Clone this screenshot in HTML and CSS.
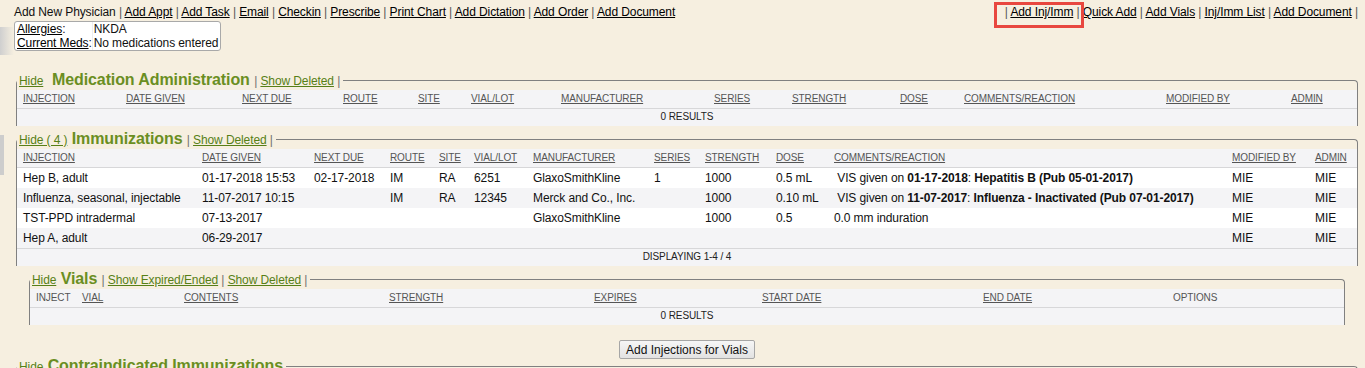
FILE: index.html
```html
<!DOCTYPE html>
<html>

<head>
  <meta charset="UTF-8">
  <title>Patient Chart - Injections</title>
  <link rel="stylesheet" href="styles.css">
</head>

<body>

  <div class="edge edge-top"></div>
  <div class="edge edge-mid"></div>

  <div class="topbar">
    <div class="topbar-left">
      <div class="links">
        Add New Physician <span class="pipe">|</span> <a href="#">Add Appt</a> <span class="pipe">|</span>
        <a href="#">Add Task</a> <span class="pipe">|</span> <a href="#">Email</a> <span class="pipe">|</span>
        <a href="#">Checkin</a> <span class="pipe">|</span> <a href="#">Prescribe</a> <span class="pipe">|</span>
        <a href="#">Print Chart</a> <span class="pipe">|</span> <a href="#">Add Dictation</a> <span class="pipe">|</span>
        <a href="#">Add Order</a> <span class="pipe">|</span> <a href="#">Add Document</a>
      </div>
      <table class="alerts">
        <tr>
          <td class="alerts-label"><a href="#">Allergies</a>:</td>
          <td class="alerts-value">NKDA</td>
        </tr>
        <tr>
          <td class="alerts-label"><a href="#">Current Meds</a>:</td>
          <td class="alerts-value">No medications entered</td>
        </tr>
      </table>
    </div>

    <div class="links">
      <span class="pipe">|</span> <a href="#">Add Inj/Imm</a> <span class="pipe">|</span>
      <a href="#">Quick Add</a> <span class="pipe">|</span> <a href="#">Add Vials</a> <span class="pipe">|</span>
      <a href="#">Inj/Imm List</a> <span class="pipe">|</span> <a href="#">Add Document</a> <span class="pipe">|</span>
    </div>
  </div>

  <!-- medication administration -->
  <fieldset class="section">
    <legend><a class="small" href="#">Hide</a>&nbsp; <span class="title">Medication Administration</span> <span class="small sep">| <a href="#">Show Deleted</a> |</span></legend>
    <table class="grid med-grid">
      <colgroup>
        <col><col><col><col><col><col><col><col><col><col><col><col><col>
      </colgroup>
      <thead>
        <tr>
          <th><a href="#">Injection</a></th>
          <th><a href="#">Date Given</a></th>
          <th><a href="#">Next Due</a></th>
          <th><a href="#">Route</a></th>
          <th><a href="#">Site</a></th>
          <th><a href="#">Vial/Lot</a></th>
          <th><a href="#">Manufacturer</a></th>
          <th><a href="#">Series</a></th>
          <th><a href="#">Strength</a></th>
          <th><a href="#">Dose</a></th>
          <th><a href="#">Comments/Reaction</a></th>
          <th><a href="#">Modified By</a></th>
          <th><a href="#">Admin</a></th>
        </tr>
      </thead>
      <tfoot>
        <tr><td colspan="13">0 results</td></tr>
      </tfoot>
    </table>
  </fieldset>

  <!-- immunizations -->
  <fieldset class="section">
    <legend><a class="small" href="#">Hide ( 4 )</a> <span class="title">Immunizations</span> <span class="small sep">| <a href="#">Show Deleted</a> |</span></legend>
    <table class="grid imm-grid">
      <colgroup>
        <col><col><col><col><col><col><col><col><col><col><col><col><col>
      </colgroup>
      <thead>
        <tr>
          <th><a href="#">Injection</a></th>
          <th><a href="#">Date Given</a></th>
          <th><a href="#">Next Due</a></th>
          <th><a href="#">Route</a></th>
          <th><a href="#">Site</a></th>
          <th><a href="#">Vial/Lot</a></th>
          <th><a href="#">Manufacturer</a></th>
          <th><a href="#">Series</a></th>
          <th><a href="#">Strength</a></th>
          <th><a href="#">Dose</a></th>
          <th><a href="#">Comments/Reaction</a></th>
          <th><a href="#">Modified By</a></th>
          <th><a href="#">Admin</a></th>
        </tr>
      </thead>
      <tbody>
        <tr>
          <td>Hep B, adult</td>
          <td>01-17-2018 15:53</td>
          <td>02-17-2018</td>
          <td>IM</td>
          <td>RA</td>
          <td>6251</td>
          <td>GlaxoSmithKline</td>
          <td>1</td>
          <td>1000</td>
          <td>0.5 mL</td>
          <td>&nbsp;VIS given on <b>01-17-2018</b>: <b>Hepatitis B (Pub 05-01-2017)</b></td>
          <td>MIE</td>
          <td>MIE</td>
        </tr>
        <tr>
          <td>Influenza, seasonal, injectable</td>
          <td>11-07-2017 10:15</td>
          <td></td>
          <td>IM</td>
          <td>RA</td>
          <td>12345</td>
          <td>Merck and Co., Inc.</td>
          <td></td>
          <td>1000</td>
          <td>0.10 mL</td>
          <td>&nbsp;VIS given on <b>11-07-2017</b>: <b>Influenza - Inactivated (Pub 07-01-2017)</b></td>
          <td>MIE</td>
          <td>MIE</td>
        </tr>
        <tr>
          <td>TST-PPD intradermal</td>
          <td>07-13-2017</td>
          <td></td>
          <td></td>
          <td></td>
          <td></td>
          <td>GlaxoSmithKline</td>
          <td></td>
          <td>1000</td>
          <td>0.5</td>
          <td>0.0 mm induration</td>
          <td>MIE</td>
          <td>MIE</td>
        </tr>
        <tr>
          <td>Hep A, adult</td>
          <td>06-29-2017</td>
          <td></td>
          <td></td>
          <td></td>
          <td></td>
          <td></td>
          <td></td>
          <td></td>
          <td></td>
          <td></td>
          <td>MIE</td>
          <td>MIE</td>
        </tr>
      </tbody>
      <tfoot>
        <tr><td colspan="13">Displaying 1-4 / 4</td></tr>
      </tfoot>
    </table>
  </fieldset>

  <!-- vials -->
  <fieldset class="section vials">
    <legend><a class="small" href="#">Hide</a> <span class="title">Vials</span> <span class="small sep">| <a href="#">Show Expired/Ended</a> | <a href="#">Show Deleted</a> |</span></legend>
    <table class="grid vial-grid">
      <colgroup>
        <col><col><col><col><col><col><col><col>
      </colgroup>
      <thead>
        <tr>
          <th>Inject</th>
          <th><a href="#">Vial</a></th>
          <th><a href="#">Contents</a></th>
          <th><a href="#">Strength</a></th>
          <th><a href="#">Expires</a></th>
          <th><a href="#">Start Date</a></th>
          <th><a href="#">End Date</a></th>
          <th>Options</th>
        </tr>
      </thead>
      <tfoot>
        <tr><td colspan="8">0 results</td></tr>
      </tfoot>
    </table>
  </fieldset>

  <div class="actions">
    <button type="button">Add Injections for Vials</button>
  </div>

  <!-- contraindicated -->
  <fieldset class="section">
    <legend><a class="small" href="#">Hide</a> <span class="title">Contraindicated Immunizations</span></legend>
  </fieldset>

  <div class="callout"></div>

</body>

</html>
```

FILE: styles.css
```css
:root {
  --page-bg: #f6efe0;
  --grid-bg: #f4f4f6;
  --grid-line: #d7d7d9;
  --green-title: #6a8e22;
  --green-link: #577f16;
}

body {
  position: relative;
  height: 368px;
  box-sizing: border-box;
  margin: 0;
  padding: 5px 7px 0 14px;
  overflow: hidden;

  background-color: var(--page-bg);
  color: #111;
  font-family: "Liberation Sans", Arial, sans-serif;
  font-size: 12px;
  letter-spacing: -0.1px;
}

a {
  color: #000;
  text-decoration: underline;
}

/* grey bits of the parent frame bleeding in on the left */
.edge {
  position: absolute;
  left: 0;
}

.edge-top {
  top: 27px;
  width: 14px;
  height: 28px;
  background: linear-gradient(to right, #cfcfcf, rgba(246, 239, 224, 0));
}

.edge-mid {
  top: 135px;
  width: 4px;
  height: 40px;
  background-color: #cdcdcd;
}

/* top links */

.topbar {
  display: flex;
  justify-content: space-between;
  align-items: flex-start;
  margin-bottom: 19px;
}

.links {
  line-height: 14px;
  color: #111;
  white-space: nowrap;
}

.pipe {
  color: #555;
}

.alerts {
  margin-top: 2px;
  width: 207px;
  border: 1px solid #a9a9a9;
  border-radius: 3px;
  border-spacing: 0;
  background-color: #fff;
}

.alerts td {
  padding: 0;
  line-height: 14px;
  white-space: nowrap;
}

.alerts-label {
  width: 74px;
  padding-left: 2px !important;
  border-right: 1px solid #eeeeee;
}

.alerts-value {
  padding-left: 1px !important;
}

/* sections */

.section {
  min-width: 0;
  margin: 0 0 3px 2px;
  padding: 0;
  border: 1px solid #808080;
  border-bottom: none;
  border-radius: 4px 4px 0 0;
}

.section legend {
  padding: 0 3px 0 2px;
  font-size: 16px;
  line-height: 20px;
  color: #666;
  white-space: nowrap;
}

.section legend a {
  color: var(--green-link);
}

.small {
  font-size: 12px;
  line-height: 14px;
}

.sep {
  color: #6f6f6f;
}

.title {
  font-weight: bold;
  color: var(--green-title);
}

.vials {
  margin-left: 15px;
  margin-right: 13px;
}

/* grids */

.grid {
  width: 100%;
  table-layout: fixed;
  border-collapse: collapse;
  background-color: var(--grid-bg);
}

.grid th {
  padding: 3px 5px 3px 6px;
  border-bottom: 1px solid var(--grid-line);
  font-size: 10px;
  font-weight: normal;
  line-height: 12px;
  text-align: left;
  text-transform: uppercase;
  color: #555;
  white-space: nowrap;
  overflow: hidden;
}

.grid th a {
  color: #555;
}

.grid td {
  padding: 3px 5px 3px 6px;
  line-height: 14px;
  white-space: nowrap;
  overflow: hidden;
}

.grid tbody tr:nth-child(odd) {
  background-color: #fff;
}

.grid tfoot td {
  padding: 2px 5px 3px;
  border-top: 1px solid var(--grid-line);
  font-size: 10px;
  line-height: 12px;
  text-align: center;
  text-transform: uppercase;
  color: #222;
}

.med-grid col:nth-child(1) { width: 103px; }
.med-grid col:nth-child(2) { width: 116px; }
.med-grid col:nth-child(3) { width: 101px; }
.med-grid col:nth-child(4) { width: 75px; }
.med-grid col:nth-child(5) { width: 53px; }
.med-grid col:nth-child(6) { width: 90px; }
.med-grid col:nth-child(7) { width: 153px; }
.med-grid col:nth-child(8) { width: 78px; }
.med-grid col:nth-child(9) { width: 108px; }
.med-grid col:nth-child(10) { width: 64px; }
.med-grid col:nth-child(11) { width: 202px; }
.med-grid col:nth-child(12) { width: 125px; }
.med-grid col:nth-child(13) { width: 72px; }

.imm-grid col:nth-child(1) { width: 179px; }
.imm-grid col:nth-child(2) { width: 112px; }
.imm-grid col:nth-child(3) { width: 76px; }
.imm-grid col:nth-child(4) { width: 49px; }
.imm-grid col:nth-child(5) { width: 35px; }
.imm-grid col:nth-child(6) { width: 59px; }
.imm-grid col:nth-child(7) { width: 121px; }
.imm-grid col:nth-child(8) { width: 51px; }
.imm-grid col:nth-child(9) { width: 71px; }
.imm-grid col:nth-child(10) { width: 58px; }
.imm-grid col:nth-child(11) { width: 398px; }
.imm-grid col:nth-child(12) { width: 83px; }
.imm-grid col:nth-child(13) { width: 48px; }

.vial-grid col:nth-child(1) { width: 46px; }
.vial-grid col:nth-child(2) { width: 102px; }
.vial-grid col:nth-child(3) { width: 205px; }
.vial-grid col:nth-child(4) { width: 205px; }
.vial-grid col:nth-child(5) { width: 168px; }
.vial-grid col:nth-child(6) { width: 221px; }
.vial-grid col:nth-child(7) { width: 190px; }
.vial-grid col:nth-child(8) { width: 177px; }

/* button row */

.actions {
  display: flex;
  justify-content: center;
  margin: 0 0 -3px 2px;
  padding-top: 12px;
}

.actions button {
  height: 19px;
  padding: 0 6px;
  border: 1px solid #a6a6a6;
  border-radius: 2px;
  background: linear-gradient(#f6f6f6, #e2e2e2);
  color: #111;
  font-family: "Liberation Sans", Arial, sans-serif;
  font-size: 12px;
}

/* red annotation round the link */
.callout {
  position: absolute;
  left: 994px;
  top: 2px;
  width: 84px;
  height: 20px;
  border: 3px solid #e8473f;
}
```
